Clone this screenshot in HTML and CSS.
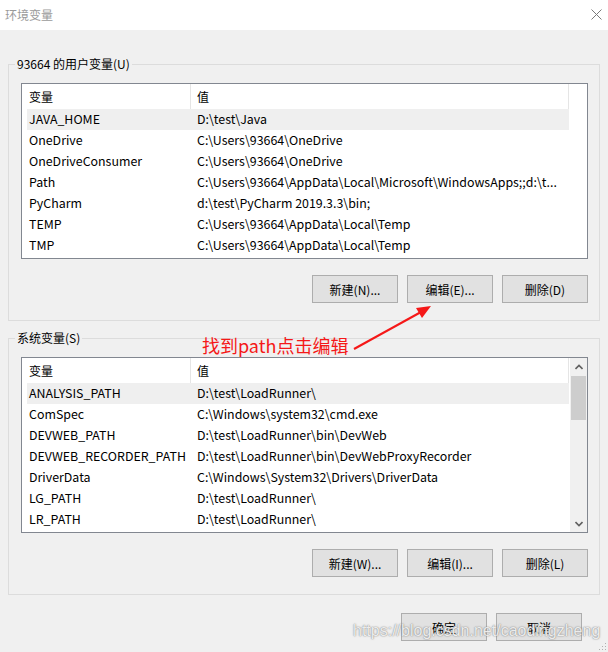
FILE: index.html
```html
<!DOCTYPE html>
<html lang="zh-CN">
<head>
    <meta charset="UTF-8">
    <title>环境变量</title>
    <link rel="stylesheet" href="styles.css">
</head>
<body>
    <div class="titlebar">
        <span class="title">环境变量</span>
        <svg class="close" width="11" height="11" viewBox="0 0 11 11">
            <path d="M0.5 0.5 L10.5 10.5 M10.5 0.5 L0.5 10.5" stroke="#7a7a7a" stroke-width="1" fill="none"/>
        </svg>
    </div>

    <div class="main">
        <!-- user variables -->
        <fieldset class="group">
            <legend>93664 的用户变量(U)</legend>
            <div class="list">
                <div class="cols">
                    <div class="list-head">
                        <div class="hcell name">变量</div>
                        <div class="hcell value">值</div>
                    </div>
                    <div class="row selected"><span class="c-name">JAVA_HOME</span><span class="c-value">D:\test\Java</span></div>
                    <div class="row"><span class="c-name">OneDrive</span><span class="c-value">C:\Users\93664\OneDrive</span></div>
                    <div class="row"><span class="c-name">OneDriveConsumer</span><span class="c-value">C:\Users\93664\OneDrive</span></div>
                    <div class="row"><span class="c-name">Path</span><span class="c-value">C:\Users\93664\AppData\Local\Microsoft\WindowsApps;;d:\t...</span></div>
                    <div class="row"><span class="c-name">PyCharm</span><span class="c-value">d:\test\PyCharm 2019.3.3\bin;</span></div>
                    <div class="row"><span class="c-name">TEMP</span><span class="c-value">C:\Users\93664\AppData\Local\Temp</span></div>
                    <div class="row"><span class="c-name">TMP</span><span class="c-value">C:\Users\93664\AppData\Local\Temp</span></div>
                </div>
            </div>
            <div class="buttons">
                <button class="btn">新建(N)...</button>
                <button class="btn">编辑(E)...</button>
                <button class="btn">删除(D)</button>
            </div>
        </fieldset>

        <!-- system variables -->
        <fieldset class="group second">
            <legend>系统变量(S)</legend>
            <div class="list">
                <div class="cols">
                    <div class="list-head">
                        <div class="hcell name">变量</div>
                        <div class="hcell value">值</div>
                    </div>
                    <div class="row selected"><span class="c-name">ANALYSIS_PATH</span><span class="c-value">D:\test\LoadRunner\</span></div>
                    <div class="row"><span class="c-name">ComSpec</span><span class="c-value">C:\Windows\system32\cmd.exe</span></div>
                    <div class="row"><span class="c-name">DEVWEB_PATH</span><span class="c-value">D:\test\LoadRunner\bin\DevWeb</span></div>
                    <div class="row"><span class="c-name">DEVWEB_RECORDER_PATH</span><span class="c-value">D:\test\LoadRunner\bin\DevWebProxyRecorder</span></div>
                    <div class="row"><span class="c-name">DriverData</span><span class="c-value">C:\Windows\System32\Drivers\DriverData</span></div>
                    <div class="row"><span class="c-name">LG_PATH</span><span class="c-value">D:\test\LoadRunner\</span></div>
                    <div class="row"><span class="c-name">LR_PATH</span><span class="c-value">D:\test\LoadRunner\</span></div>
                </div>
                <div class="scrollbar">
                    <div class="arrow">
                        <svg width="8" height="6" viewBox="0 0 8 6"><path d="M0.5 5 L4 1.5 L7.5 5" stroke="#606060" stroke-width="1.6" fill="none"/></svg>
                    </div>
                    <div class="thumb"></div>
                    <div class="track"></div>
                    <div class="arrow">
                        <svg width="8" height="6" viewBox="0 0 8 6"><path d="M0.5 1 L4 4.5 L7.5 1" stroke="#606060" stroke-width="1.6" fill="none"/></svg>
                    </div>
                </div>
            </div>
            <div class="buttons">
                <button class="btn">新建(W)...</button>
                <button class="btn">编辑(I)...</button>
                <button class="btn">删除(L)</button>
            </div>
        </fieldset>

        <div class="footer">
            <button class="btn">确定</button>
            <button class="btn">取消</button>
        </div>
    </div>

    <!-- screenshot annotations -->
    <div class="note">找到path点击编辑</div>
    <svg class="arrow-note" width="608" height="652" viewBox="0 0 608 652">
        <line x1="354" y1="349" x2="421" y2="312" stroke="#f51818" stroke-width="2"/>
        <polygon points="431,306 416,308 422,318" fill="#f51818"/>
    </svg>
    <div class="watermark">https://blog.csdn.net/caodingzheng</div>
    <svg class="grip" width="8" height="8" viewBox="0 0 8 8">
        <rect x="6" y="0" width="1" height="1" fill="#b0b0b0"/>
        <rect x="3" y="3" width="1" height="1" fill="#b0b0b0"/>
        <rect x="6" y="3" width="1" height="1" fill="#b0b0b0"/>
        <rect x="0" y="6" width="1" height="1" fill="#b0b0b0"/>
        <rect x="3" y="6" width="1" height="1" fill="#b0b0b0"/>
        <rect x="6" y="6" width="1" height="1" fill="#b0b0b0"/>
    </svg>
</body>
</html>
```

FILE: styles.css
```css
body {
    margin: 0;
    width: 608px;
    height: 652px;
    overflow: hidden;
    position: relative;
    background-color: #f0f0f0;
    font-family: "Noto Sans CJK SC", "Noto Sans", sans-serif;
    font-size: 12px;
    color: #000;
}

.titlebar {
    height: 30px;
    background-color: #fff;
    display: flex;
    align-items: center;
    justify-content: space-between;
    padding: 0 6px 2px 5px;
    box-sizing: border-box;
}

.title {
    color: #9a9a9a;
    font-size: 12px;
}

.close {
    display: block;
}

.main {
    padding: 26px 8px 0 8px;
}

.group {
    margin: 0;
    border: 1px solid #dcdcdc;
    padding: 11px 11px 17px 12px;
    min-width: 0;
}

.group.second {
    margin-top: 9px;
}

.group legend {
    padding: 0 2px;
    margin-left: -6px;
    line-height: 16px;
    font-size: 12px;
}

.list {
    height: 176px;
    box-sizing: border-box;
    background-color: #fff;
    border: 1px solid #828790;
    display: flex;
}

.cols {
    flex: 1;
    overflow: hidden;
}

.list-head {
    display: flex;
    height: 25px;
    width: 547px;
}

.hcell {
    box-sizing: border-box;
    border-right: 1px solid #e5e5e5;
    display: flex;
    align-items: center;
    padding-bottom: 1px;
}

.hcell.name {
    width: 169px;
    padding-left: 7px;
}

.hcell.value {
    width: 378px;
    padding-left: 6px;
}

.row {
    display: flex;
    align-items: center;
    height: 21px;
    width: 542px;
    margin-left: 5px;
    padding-bottom: 2px;
    box-sizing: border-box;
    font-size: 12.4px;
    white-space: nowrap;
    overflow: hidden;
}

.row.selected {
    background-color: #efefef;
}

.c-name {
    width: 161px;
    padding-left: 2px;
    flex-shrink: 0;
}

.c-value {
    padding-left: 7px;
}

.scrollbar {
    width: 17px;
    background-color: #f0f0f0;
    display: flex;
    flex-direction: column;
}

.arrow {
    height: 17px;
    display: flex;
    align-items: center;
    justify-content: center;
}

.thumb {
    height: 44px;
    margin: 1px 1px 0 1px;
    background-color: #cdcdcd;
}

.track {
    flex: 1;
}

.buttons {
    display: flex;
    justify-content: flex-end;
    gap: 9px;
    margin-top: 16px;
}

.btn {
    width: 86px;
    height: 28px;
    margin: 0;
    padding: 0;
    background-color: #e1e1e1;
    border: 1px solid #adadad;
    font-family: inherit;
    font-size: 12px;
    color: #000;
}

.footer {
    display: flex;
    justify-content: flex-end;
    gap: 9px;
    margin-top: 18px;
    padding-right: 18px;
}

.note {
    position: absolute;
    left: 202px;
    top: 334px;
    font-size: 18px;
    line-height: 22px;
    color: #f51818;
}

.arrow-note {
    position: absolute;
    left: 0;
    top: 0;
    pointer-events: none;
}

.watermark {
    position: absolute;
    left: 353px;
    top: 622px;
    font-family: "Liberation Sans", Arial, sans-serif;
    font-size: 16px;
    line-height: 18px;
    color: rgba(255, 255, 255, 0.85);
    text-shadow: 0 0 1px rgba(110, 110, 110, 0.8), 0 0 2px rgba(120, 120, 120, 0.6);
}

.grip {
    position: absolute;
    right: 1px;
    bottom: 1px;
}
```
